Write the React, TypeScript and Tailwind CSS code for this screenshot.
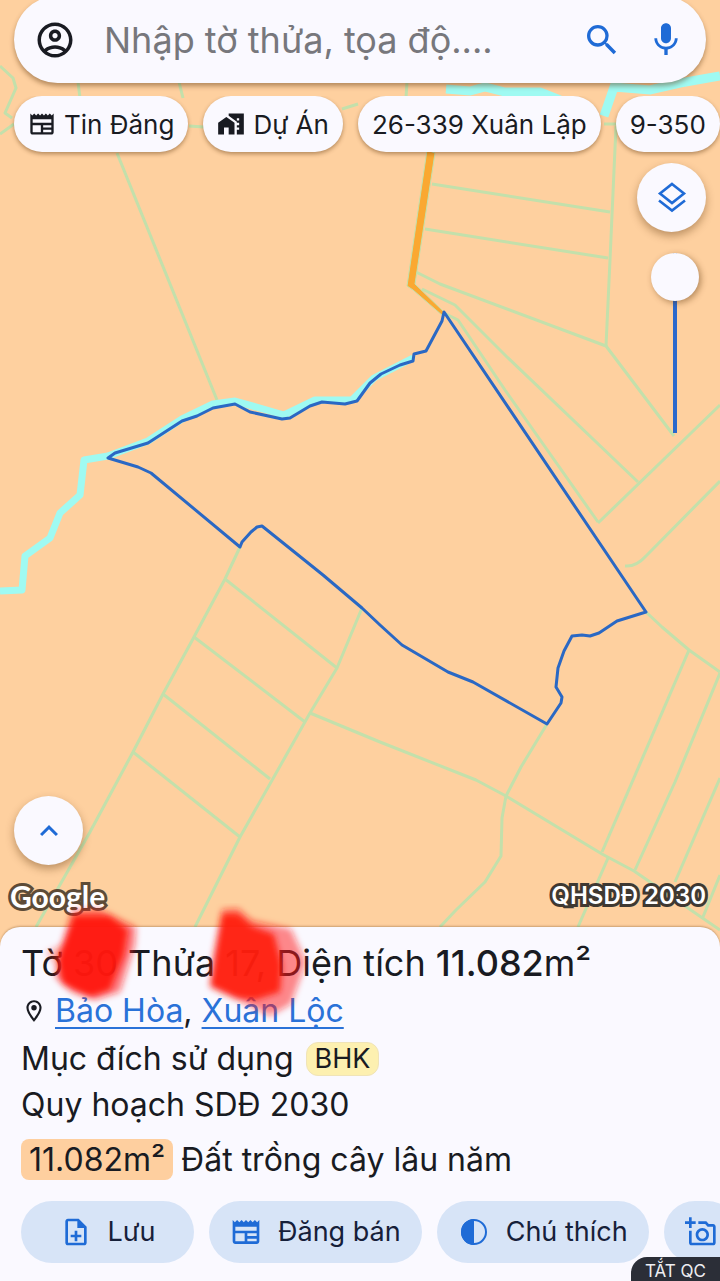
import type { ReactNode } from "react";
import {
  MdHomeWork,
  MdKeyboardArrowUp,
  MdMic,
  MdOutlineAccountCircle,
  MdOutlineAddAPhoto,
  MdOutlineLocationOn,
  MdOutlineNewspaper,
  MdOutlineNoteAdd,
  MdSearch,
} from "react-icons/md";

const parcelOutline =
  "M444 312 L442 321 L426 351 L414 354 L413 361 L400 365 L381 374 L370 383 L357 401 L345 404 L322 402 L310 406 L290 418 L282 419 L250 412 L235 404 L213 408 L197 416 L182 421 L148 443 L115 453 L108 458 L138 467 L151 473 L240 547 L242 542 L251 532 L257 527 L262 526 L323 575 L362 608 L380 625 L402 645 L448 672 L473 682 L547 724 L561 703 L562 697 L556 687 L558 668 L564 651 L572 636 L582 635 L590 636 L599 633 L617 621 L646 612 Z";

const boundaries = [
  "M117 153 L217 400",
  "M0 66 L13 78 L16 88 L5 113 L12 118 M0 134 L14 124",
  "M78 82 L80 98 M179 82 L183 98 M189 126 L204 127 M342 109 L358 104 M407 82 L406 98",
  "M604 124 L619 124 M616 126 L610 260 L606 346",
  "M432 184 L610 212",
  "M425 229 L608 258",
  "M416 272 L440 284 L606 346 L674 436",
  "M422 289 L455 305 L506 356 L638 482",
  "M442 312 L458 320 L505 390 L598 522",
  "M720 405 L598 523",
  "M720 481 L646 556 Q636 567 625 566",
  "M646 612 L662 627 L689 650 L720 672",
  "M240 547 L225 579 L194 637 L163 694 L133 752 L90 832 L36 927",
  "M225 579 L337 668",
  "M194 637 L305 722",
  "M163 694 L270 779",
  "M133 752 L240 837",
  "M362 608 L337 668 L310 713 L240 837 L195 927",
  "M310 713 L380 742 L476 780 L506 796 L602 854 L634 871 L720 930",
  "M547 724 L521 767 L506 796 L502 818 L501 856 L485 882 L456 910 L440 927",
  "M689 650 L602 852",
  "M720 673 L675 782 L635 870",
  "M720 778 L675 882",
  "M608 858 L578 927",
  "M720 875 L703 917",
];

function ParcelMap() {
  return (
    <svg
      className="absolute inset-0 size-full"
      viewBox="0 0 720 1281"
      preserveAspectRatio="xMidYMin slice"
      fill="none"
      aria-hidden="true"
    >
      <rect width="720" height="1281" fill="#fed09f" />
      <g stroke="#c3e0ab" strokeWidth="3" strokeLinejoin="round">
        {boundaries.map((d) => (
          <path key={d} d={d} />
        ))}
      </g>
      <path
        d="M0 591 L22 590 L25 556 L50 538 L60 513 L80 495 L84 460 L108 456 L148 441 L182 419 L213 404 L235 401 L284 415 L315 400 L352 400 L374 378 L413 358"
        stroke="#9ffaf2"
        strokeWidth="7"
        strokeLinejoin="round"
      />
      <path d="M446 89 L470 91 L485 87 L505 92 L540 92 L560 100" stroke="#9ffaf2" strokeWidth="9" />
      <path d="M604 116 L614 87 L650 90 L680 83 L720 76" stroke="#9ffaf2" strokeWidth="9" />
      <path d="M427 150 L407 286 L413 290 L443 316 L444 312 L415 284 L435 153 Z" fill="#faa831" stroke="#c3e0ab" strokeWidth="1" />
      <path d={parcelOutline} stroke="#2a68c4" strokeWidth="3" strokeLinejoin="round" />
    </svg>
  );
}

function ContrastIcon() {
  return (
    <svg viewBox="0 0 24 24" className="size-8" aria-hidden="true">
      <circle cx="12" cy="12" r="9" fill="none" stroke="currentColor" strokeWidth="1.5" />
      <path d="M12 2.3a9.7 9.7 0 0 0 0 19.4z" fill="currentColor" />
    </svg>
  );
}

function LayersIcon() {
  return (
    <svg viewBox="0 0 36 36" className="size-9" fill="none" stroke="currentColor" strokeWidth="2.6" aria-hidden="true">
      <path d="M18 4 L30 13.500 L18 23 L6 13.500 Z" />
      <path d="M5 20.500 L18 30.500 L31 20.500" />
    </svg>
  );
}

function Chip({ icon, children }: { icon?: ReactNode; children: ReactNode }) {
  return (
    <button
      type="button"
      className="flex h-14 shrink-0 items-center gap-2 rounded-full bg-[#faf9ff] px-3.5 text-[26px] text-[#191b22] shadow-[0_2px_4px_rgba(90,50,10,0.45)]"
    >
      {icon}
      {children}
    </button>
  );
}

function RoundButton({ label, children }: { label: string; children: ReactNode }) {
  return (
    <button
      type="button"
      aria-label={label}
      className="flex size-[69px] items-center justify-center rounded-full bg-[#faf9ff] text-4xl text-[#1f6bd6] shadow-[0_4px_8px_rgba(90,50,10,0.4)]"
    >
      {children}
    </button>
  );
}

function ActionButton({ icon, label, children }: { icon: ReactNode; label?: string; children?: ReactNode }) {
  return (
    <button
      type="button"
      aria-label={label}
      className={`flex h-[62px] shrink-0 items-center justify-center gap-4 rounded-full bg-[#d7e4f7] px-[21px] text-[27px] text-[#16203a] ${children ? "min-w-[173px]" : ""}`}
    >
      <span className="text-[32px] text-[#1f6bd6]">{icon}</span>
      {children}
    </button>
  );
}

// Brush strokes painted over the sheet and parcel numbers
function Scribbles() {
  return (
    <svg className="pointer-events-none absolute -top-6 left-0 h-[120px] w-[320px]" viewBox="0 903 320 120" aria-hidden="true">
      <defs>
        <filter id="brush" x="-20%" y="-20%" width="140%" height="140%">
          <feGaussianBlur stdDeviation="3" />
        </filter>
      </defs>
      <g fill="#ff1a12" filter="url(#brush)">
        <path d="M72 910 L100 909 L136 927 L135 945 L120 992 L95 1000 L72 992 L55 977 L60 950 Z" opacity="0.55" />
        <path d="M74 916 L110 916 L128 930 L124 955 L110 990 L90 997 L62 984 L58 958 Z" opacity="0.94" />
        <path d="M46 952 L66 942 L62 975 Z" opacity="0.3" />
        <path d="M222 909 L238 908 L252 920 L291 929 L306 962 L291 1004 L270 1016 L250 1006 L210 987 L213 955 Z" opacity="0.5" />
        <path d="M222 914 L238 914 L252 926 L274 934 L282 965 L280 992 L255 1000 L236 998 L210 986 Z" opacity="0.92" />
      </g>
    </svg>
  );
}

export default function App() {
  return (
    <main className="relative isolate flex min-h-screen flex-col overflow-hidden bg-[#fed09f] font-['Inter',sans-serif] text-[#191b22]">
      <ParcelMap />

      <header className="relative">
        <form className="mx-3.5 -mt-1 flex h-[87px] items-center rounded-full bg-[#faf9ff] px-5 shadow-[0_3px_5px_rgba(90,50,10,0.45)]">
          <button type="button" aria-label="Tài khoản" className="text-[42px]">
            <MdOutlineAccountCircle />
          </button>
          <input
            type="text"
            aria-label="Tìm kiếm"
            placeholder="Nhập tờ thửa, tọa độ...."
            className="ml-7 min-w-0 flex-1 bg-transparent text-[36px] outline-none placeholder:text-[#77777c]"
          />
          <button type="submit" aria-label="Tìm" className="text-[40px] text-[#1f6bd6]">
            <MdSearch />
          </button>
          <button type="button" aria-label="Giọng nói" className="ml-6 text-[40px] text-[#1f6bd6]">
            <MdMic />
          </button>
        </form>

        <nav className="mt-[13px] flex gap-[15px] overflow-hidden px-3.5 pb-2 whitespace-nowrap">
          <Chip icon={<MdOutlineNewspaper className="size-7" />}>Tin Đăng</Chip>
          <Chip icon={<MdHomeWork className="size-7" />}>Dự Án</Chip>
          <Chip>26-339 Xuân Lập</Chip>
          <Chip>9-350</Chip>
        </nav>
      </header>

      <div className="relative flex flex-1 flex-col px-3.5 pt-[3px]">
        <div className="flex flex-col items-end gap-[21px]">
          <RoundButton label="Lớp bản đồ">
            <LayersIcon />
          </RoundButton>
          <input
            type="range"
            aria-label="Độ mờ"
            defaultValue={100}
            className="mr-[7px] h-[180px] w-12 appearance-none bg-[linear-gradient(#2a68cc,#2a68cc)] bg-[length:4px_100%] bg-center bg-no-repeat [direction:rtl] [writing-mode:vertical-lr] [&::-webkit-slider-thumb]:size-12 [&::-webkit-slider-thumb]:appearance-none [&::-webkit-slider-thumb]:rounded-full [&::-webkit-slider-thumb]:bg-[#faf9ff] [&::-webkit-slider-thumb]:shadow-[2px_2px_6px_rgba(90,50,10,0.45)]"
          />
        </div>
        <div className="mt-auto">
          <RoundButton label="Mở rộng">
            <MdKeyboardArrowUp />
          </RoundButton>
        </div>
        <div className="my-3 -ml-1 flex h-[38px] items-center justify-between text-white">
          <span className="font-['Lato',sans-serif] text-[30px] font-bold [-webkit-text-stroke:6px_#5d4b37] [paint-order:stroke_fill]">
            Google
          </span>
          <span className="text-2xl font-semibold [-webkit-text-stroke:6px_#3f3932] [paint-order:stroke_fill]">
            QHSDĐ 2030
          </span>
        </div>
      </div>

      <section className="relative rounded-t-[20px] bg-[#faf9ff] pt-3 pb-[18px] shadow-[0_-1px_2px_rgba(90,50,10,0.3)]">
        <div className="px-[21px]">
          <h1 className="text-[36px] leading-[48px]">
            Tờ 30 Thửa 17, Diện tích <strong className="font-medium">11.082</strong>m²
          </h1>
          <p className="flex items-center text-[32px] leading-[48px]">
            <MdOutlineLocationOn className="mr-2 size-[26px]" />
            <span>
              <a href="#bao-hoa" className="underline decoration-2 underline-offset-[5px] [text-decoration-skip-ink:none] text-[#2a72d8]">Bảo Hòa</a>,{" "}
              <a href="#xuan-loc" className="underline decoration-2 underline-offset-[5px] [text-decoration-skip-ink:none] text-[#2a72d8]">Xuân Lộc</a>
            </span>
          </p>
          <p className="flex items-center gap-3 text-[32px] leading-[48px]">
            Mục đích sử dụng
            <span className="rounded-xl border border-[#f0e4b8] bg-[#fdf0b0] px-2 text-[27px] leading-8">BHK</span>
          </p>
          <p className="text-[32px] leading-[44px]">Quy hoạch SDĐ 2030</p>
          <p className="mt-3 flex items-center gap-2 text-[32px] leading-[41px]">
            <span className="rounded-lg bg-[#fecf9f] px-2">11.082m²</span>
            Đất trồng cây lâu năm
          </p>
        </div>
        <div className="mt-[21px] flex gap-[15px] overflow-hidden pl-[21px] whitespace-nowrap">
          <ActionButton icon={<MdOutlineNoteAdd />}>Lưu</ActionButton>
          <ActionButton icon={<MdOutlineNewspaper />}>Đăng bán</ActionButton>
          <ActionButton icon={<ContrastIcon />}>Chú thích</ActionButton>
          <ActionButton icon={<MdOutlineAddAPhoto />} label="Thêm ảnh" />
        </div>
        <Scribbles />
        <button
          type="button"
          className="absolute right-0 bottom-0 h-6 rounded-tl-2xl bg-[#2b2e37] px-3.5 pt-1 text-[17px] leading-5 text-[#eeeef2]"
        >
          TẮT QC
        </button>
      </section>
    </main>
  );
}
